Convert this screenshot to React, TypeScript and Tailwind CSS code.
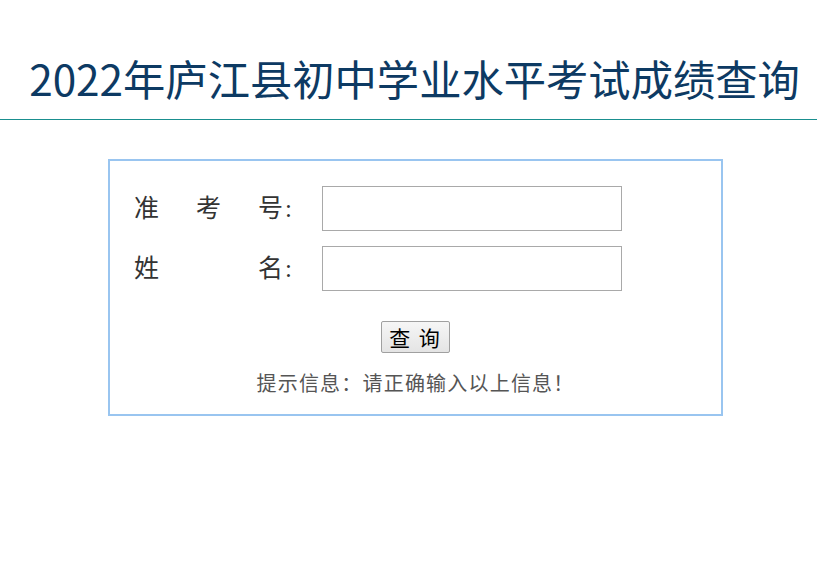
const cjk = "font-['Liberation_Serif','Noto_Sans_CJK_SC',serif]";

const Field = ({ chars }: { chars: string[] }) => (
  <div className="flex h-[45px] items-center">
    <div className={`${cjk} ml-[24px] flex w-[158px] justify-between text-[25px] leading-none text-[#333]`}>
      {chars.map((c, i) => (
        <span key={i}>
          {c}
          {i === chars.length - 1 && <span className="ml-[2px]">:</span>}
        </span>
      ))}
    </div>
    <input
      type="text"
      className="ml-[30px] h-[45px] w-[300px] border border-[#a9a9a9] bg-white px-2 outline-none"
    />
  </div>
);

export default function App() {
  return (
    <div className="min-h-screen bg-white">
      <div className="border-b border-[#1a8f8f] pt-[53px] pb-[16px] pl-[12px]">
        <h1 className="text-center font-['Noto_Sans_CJK_SC',sans-serif] text-[42.3px] leading-[50px] text-[#0d3a63]">
          2022年庐江县初中学业水平考试成绩查询
        </h1>
      </div>

      <div className="ml-[108px] mt-[39px] w-[615px] border-2 border-[#99c5f0] pt-[25px] pb-[16px]">
        <div className="flex flex-col gap-[15px]">
          <Field chars={["准", "考", "号"]} />
          <Field chars={["姓", "名"]} />
        </div>
        <div className="mt-[30px] flex justify-center">
          <button className="h-[32px] w-[69px] rounded-[2px] border border-[#a0a0a0] bg-gradient-to-b from-[#f6f6f6] to-[#e4e4e4] font-['Noto_Sans_CJK_SC',sans-serif] text-[21px] leading-none tracking-[2px] text-black">
            查 询
          </button>
        </div>
        <p className={`${cjk} mt-[17px] text-center text-[20px] leading-[28px] tracking-[1.2px] text-[#555]`}>
          提示信息：请正确输入以上信息！
        </p>
      </div>
    </div>
  );
}
